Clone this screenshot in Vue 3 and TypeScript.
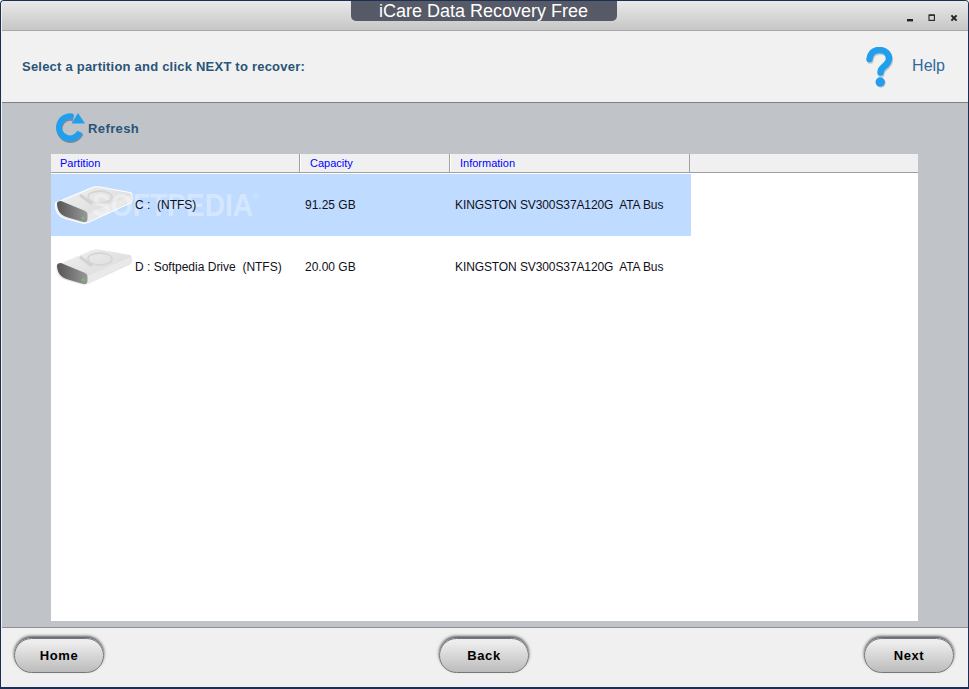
<script setup lang="ts">
interface Row { id: string; name: string; cap: string; selected: boolean }
const rows: Row[] = [
  { id: 'c', name: 'C :  (NTFS)', cap: '91.25 GB', selected: true },
  { id: 'd', name: 'D : Softpedia Drive  (NTFS)', cap: '20.00 GB', selected: false },
]
const info = 'KINGSTON SV300S37A120G  ATA Bus'
const cols = ['Partition', 'Capacity', 'Information']
const buttons = ['Home', 'Back', 'Next']
</script>

<template>
  <div class="window">
    <div class="titlebar">
      <div class="title">iCare Data Recovery Free</div>
      <div class="winbtns">
        <svg width="8" height="8" viewBox="0 0 8 8"><rect x="1" y="5" width="6" height="2.4" fill="#222" /></svg>
        <svg width="8" height="8" viewBox="0 0 8 8"><rect x="1" y="1" width="5.4" height="5.4" fill="none" stroke="#222" stroke-width="1.1" /><rect x="1" y="0.6" width="5.4" height="1.2" fill="#222" /></svg>
        <svg width="8" height="8" viewBox="0 0 8 8"><path d="M1.4 1.4 6.6 6.6M6.6 1.4 1.4 6.6" stroke="#222" stroke-width="2" /></svg>
      </div>
    </div>
    <div class="header">
      <div class="prompt">Select a partition and click NEXT to recover:</div>
      <div class="help">
        <svg class="qmark" width="30" height="42" viewBox="0 0 30 42">
          <path d="M5.500 12.500C6 7 9.500 3.500 15 3.500c6 0 10 3.500 10 8.500 0 4-2.500 6-5 8-2.200 1.700-3.500 3-3.500 6" fill="none" stroke="#8a9aa6" stroke-opacity=".5" stroke-width="6.500" stroke-linecap="round" transform="translate(.8 1)" />
          <path d="M5.500 12C6 7 9.500 3 15 3c6 0 10 3.500 10 8.500 0 4-2.500 6-5 8-2.200 1.700-3.500 3-3.500 6" fill="none" stroke="#219fed" stroke-width="6.500" stroke-linecap="round" />
          <circle cx="17" cy="36" r="4.700" fill="#8a9aa6" fill-opacity=".5" />
          <circle cx="16.200" cy="35" r="4.700" fill="#219fed" />
        </svg>
        <span class="helptext">Help</span>
      </div>
    </div>
    <div class="content">
      <div class="refresh">
        <svg width="30" height="30" viewBox="0 0 30 30">
          <path d="M24 19.500A11 11 0 1 1 17 4.300" fill="none" stroke="#7c8a94" stroke-width="6" transform="translate(.5 1)" />
          <path d="M24 19A11 11 0 1 1 17 3.800" fill="none" stroke="#219fed" stroke-width="6" />
          <path d="M22 0 29 10.500 15.500 10.500Z" fill="#219fed" />
        </svg>
        <span>Refresh</span>
      </div>
      <div class="table">
        <div class="thead">
          <div v-for="c in cols" :key="c" class="th">{{ c }}</div>
          <div class="th-rest"></div>
        </div>
        <div v-for="r in rows" :key="r.id" class="row" :class="{ selected: r.selected }">
          <div class="cell first">
            <svg class="drive" width="90" height="50" viewBox="0 0 90 50">
              <defs>
                <linearGradient id="top" x1="0" y1="0" x2="1" y2="1">
                  <stop offset="0" stop-color="#f2f2f2" />
                  <stop offset="1" stop-color="#d4d4d4" />
                </linearGradient>
                <linearGradient id="face" x1="0" y1="0" x2="1" y2="0">
                  <stop offset="0" stop-color="#555" />
                  <stop offset="1" stop-color="#999" />
                </linearGradient>
              </defs>
              <path d="M5.500 23 41 8c3-1.200 6-1.500 9-1l30 5.500c1.500.3 2 1 2 2.500v5c0 1.500-.5 2.200-2 3L39 42c-2.500 1.200-4.500 1.500-7 1L17 39c-6-1.500-10-5-11-10-.3-2.500-.5-4-.5-6Z" fill="url(#top)" stroke="#fff" stroke-width="1.200" />
              <path d="M82 14.500 37 34v8.500l45-22Z" fill="#e9e9e9" />
              <ellipse cx="50" cy="17" rx="12" ry="6" fill="none" stroke="#d6d6d6" stroke-width="1.800" />
              <path d="M30 15 42 24" stroke="#d2d2d2" stroke-width="3" fill="none" />
              <path d="M7 23c.8-1.500 2-2.300 4-2l23 9.500c2.500 1 3.500 2 3.500 4V39c0 2.500-1.500 3.500-4 3L18 37.500C10 35 7 30 7 23Z" fill="url(#face)" />
              <circle cx="33" cy="38" r="1.300" fill="#5fd05f" />
            </svg>
            <span class="name">{{ r.name }}</span>
          </div>
          <div class="cell cap">{{ r.cap }}</div>
          <div class="cell inf">{{ info }}</div>
          <span v-if="r.selected" class="mark">SOFTPEDIA<sup>®</sup></span>
        </div>
      </div>
    </div>
    <div class="footer">
      <button v-for="b in buttons" :key="b" class="btn">{{ b }}</button>
    </div>
  </div>
</template>

<style scoped>
.window {
  width: 969px;
  height: 689px;
  box-sizing: border-box;
  border: solid #1c2f52;
  border-width: 1px 1px 2px 1px;
  border-radius: 4px 4px 0 0;
  background: #f0f0f0;
  display: flex;
  flex-direction: column;
  overflow: hidden;
  font-family: "Liberation Sans", Arial, sans-serif;
}
.titlebar {
  height: 29px;
  flex: none;
  margin-left: 1px;
  background: linear-gradient(#e9e9e9, #c6c6c6);
  border-bottom: 1px solid #a9a9a9;
  display: flex;
  justify-content: center;
  position: relative;
}
.title {
  width: 266px;
  height: 21px;
  margin-top: -1px;
  margin-left: -3px;
  background: #555a66;
  border-radius: 0 0 5px 5px;
  color: #fff;
  font-size: 18px;
  line-height: 22px;
  text-align: center;
}
.winbtns {
  position: absolute;
  right: 10px;
  top: 13px;
  display: flex;
  gap: 14px;
}
.header {
  height: 71px;
  flex: none;
  margin-left: 1px;
  background: #f1f1f1;
  border-bottom: 1px solid #808080;
  display: flex;
  align-items: center;
  justify-content: space-between;
  padding: 0 23px 0 20px;
}
.prompt {
  color: #2a5478;
  font-size: 13px;
  font-weight: bold;
  letter-spacing: 0.22px;
}
.help {
  display: flex;
  align-items: center;
  gap: 18px;
}
.qmark { margin-top: 2px; }
.helptext {
  color: #2f6a9b;
  font-size: 16px;
  margin-top: -2px;
}
.content {
  flex: 1;
  background: #c0c4c9;
  margin-left: 1px;
  padding: 10px 50px 6px 49px;
  display: flex;
  flex-direction: column;
  min-height: 0;
}
.refresh {
  display: flex;
  align-items: center;
  height: 31px;
  margin: 0 0 10px 5px;
  gap: 2px;
  color: #2a5478;
  font-size: 13px;
  font-weight: bold;
  letter-spacing: 0.4px;
}
.refresh svg { margin-top: -1px; }
.table {
  flex: 1;
  background: #fff;
  min-height: 0;
  position: relative;
}
.thead {
  display: flex;
  height: 18px;
  background: #f0f0f0;
  border-bottom: 1px solid #a0a0a0;
}
.th {
  box-sizing: border-box;
  width: 150px;
  padding-left: 10px;
  color: #0000ff;
  font-size: 11px;
  line-height: 18px;
  border-right: 1px solid #a0a0a0;
}
.th:first-child {
  width: 249px;
  padding-left: 9px;
}
.th:nth-child(3) { width: 240px; }
.th + .th { box-shadow: inset 1px 0 #fff; }
.th-rest { flex: 1; }
.row {
  display: flex;
  align-items: center;
  width: 640px;
  height: 62px;
  position: relative;
  color: #10101a;
  font-size: 12px;
}
.selected {
  background: #bfdbff;
  margin-top: 1px;
}
.cell { box-sizing: border-box; white-space: pre; }
.first {
  width: 249px;
  display: flex;
  align-items: center;
}
.drive { flex: none; margin: 0 -5px 0 -1px; }
.name { position: relative; z-index: 1; }
.cap { width: 150px; padding-left: 5px; }
.inf { padding-left: 5px; letter-spacing: -0.1px; }
.mark {
  position: absolute;
  left: 41px;
  top: 14px;
  color: rgba(255, 255, 255, 0.35);
  font-size: 32px;
  font-weight: bold;
  line-height: 34px;
  transform: scaleX(0.88);
  transform-origin: left center;
  pointer-events: none;
}
.mark sup { font-size: 9px; font-weight: normal; vertical-align: 16px; line-height: 0; }
.footer {
  height: 59px;
  flex: none;
  margin-left: 1px;
  border-top: 1px solid #8e9094;
  background: #f0f0f0;
  display: flex;
  align-items: center;
  justify-content: space-between;
  padding: 0 14px 0 12px;
}
.btn {
  width: 90px;
  height: 35px;
  margin-top: -4px;
  box-sizing: border-box;
  border: 1px solid #74777c;
  border-radius: 18px;
  background: linear-gradient(#ececec, #eeeeee 8%, #bcbcbc);
  box-shadow: 0 -2px 3px #55585c;
  color: #000;
  font-family: "Liberation Sans", Arial, sans-serif;
  font-size: 13px;
  font-weight: bold;
  letter-spacing: 0.6px;
  padding: 0;
}
</style>
